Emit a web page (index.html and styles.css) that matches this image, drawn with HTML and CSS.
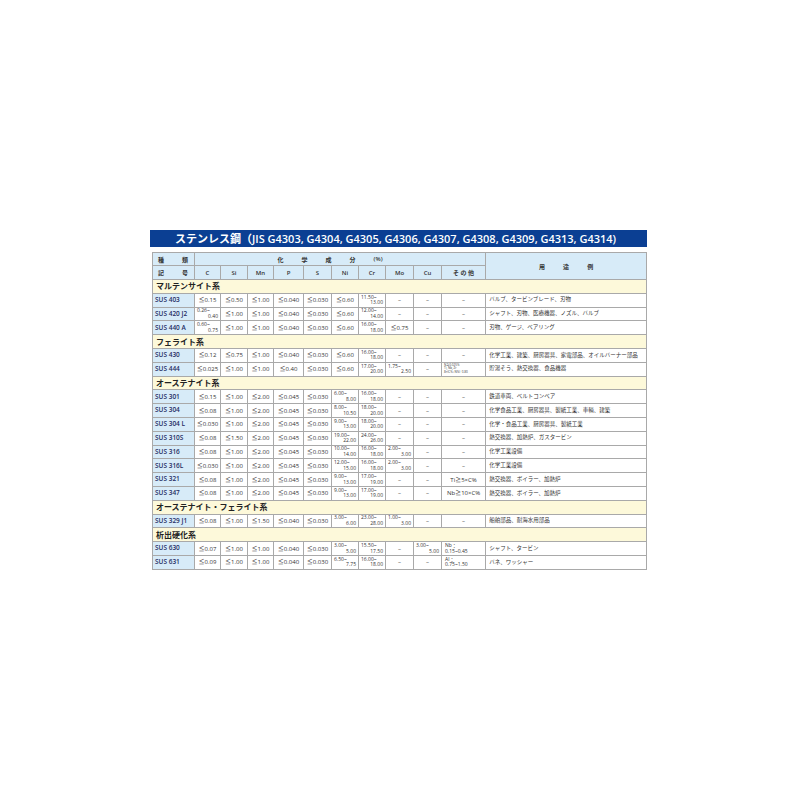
FILE: index.html
```html
<!DOCTYPE html>
<html lang="ja">
<head>
<meta charset="utf-8">
<title>ステンレス鋼</title>
<link rel="stylesheet" href="styles.css">
</head>
<body>
<div class="wrap">
  <div class="title">ステンレス鋼（JIS G4303, G4304, G4305, G4306, G4307, G4308, G4309, G4313, G4314)</div>
  <table class="spec">
    <colgroup>
      <col class="c-name"><col class="c26"><col class="c27"><col class="c26"><col class="c30"><col class="c28"><col class="c27"><col class="c27"><col class="c28"><col class="c28"><col class="c-other"><col class="c-use">
    </colgroup>
    <thead>
      <tr class="h1">
        <th class="hname"><span class="spread"><span>種</span><span>類</span></span></th>
        <th colspan="10" class="hchem"><span class="chem"><span>化</span><span>学</span><span>成</span><span>分</span><span>(%)</span></span></th>
        <th rowspan="2" class="huse"><span class="usel"><span>用</span><span>途</span><span>例</span></span></th>
      </tr>
      <tr class="h2">
        <th class="hname"><span class="spread"><span>記</span><span>号</span></span></th>
        <th>C</th><th>Si</th><th>Mn</th><th>P</th><th>S</th><th>Ni</th><th>Cr</th><th>Mo</th><th>Cu</th><th>そ の 他</th>
      </tr>
    </thead>
    <tbody>
      <tr class="cat"><td colspan="12">マルテンサイト系</td></tr>
      <tr><td class="nm">SUS 403</td><td>≦0.15</td><td>≦0.50</td><td>≦1.00</td><td>≦0.040</td><td>≦0.030</td><td>≦0.60</td><td class="rg"><span>11.50~</span><span>13.00</span></td><td>–</td><td>–</td><td>–</td><td class="use">バルブ、タービンブレード、刃物</td></tr>
      <tr><td class="nm">SUS 420 J2</td><td class="rg"><span>0.26~</span><span>0.40</span></td><td>≦1.00</td><td>≦1.00</td><td>≦0.040</td><td>≦0.030</td><td>≦0.60</td><td class="rg"><span>12.00~</span><span>14.00</span></td><td>–</td><td>–</td><td>–</td><td class="use">シャフト、刃物、医療機器、ノズル、バルブ</td></tr>
      <tr><td class="nm">SUS 440 A</td><td class="rg"><span>0.60~</span><span>0.75</span></td><td>≦1.00</td><td>≦1.00</td><td>≦0.040</td><td>≦0.030</td><td>≦0.60</td><td class="rg"><span>16.00~</span><span>18.00</span></td><td>≦0.75</td><td>–</td><td>–</td><td class="use">刃物、ゲージ、ベアリング</td></tr>
      <tr class="cat"><td colspan="12">フェライト系</td></tr>
      <tr><td class="nm">SUS 430</td><td>≦0.12</td><td>≦0.75</td><td>≦1.00</td><td>≦0.040</td><td>≦0.030</td><td>≦0.60</td><td class="rg"><span>16.00~</span><span>18.00</span></td><td>–</td><td>–</td><td>–</td><td class="use">化学工業、建築、厨房器具、家電部品、オイルバーナー部品</td></tr>
      <tr><td class="nm">SUS 444</td><td>≦0.025</td><td>≦1.00</td><td>≦1.00</td><td>≦0.40</td><td>≦0.030</td><td>≦0.60</td><td class="rg"><span>17.00~</span><span>20.00</span></td><td class="rg"><span>1.75~</span><span>2.50</span></td><td>–</td><td class="tiny"><span>N≦0.025%</span><span>Ti, Nb, Zr</span><span>8×(C%+N%)~0.80</span></td><td class="use">貯湯そう、熱交換器、食品機器</td></tr>
      <tr class="cat"><td colspan="12">オーステナイト系</td></tr>
      <tr><td class="nm">SUS 301</td><td>≦0.15</td><td>≦1.00</td><td>≦2.00</td><td>≦0.045</td><td>≦0.030</td><td class="rg"><span>6.00~</span><span>8.00</span></td><td class="rg"><span>16.00~</span><span>18.00</span></td><td>–</td><td>–</td><td>–</td><td class="use">鉄道車両、ベルトコンベア</td></tr>
      <tr><td class="nm">SUS 304</td><td>≦0.08</td><td>≦1.00</td><td>≦2.00</td><td>≦0.045</td><td>≦0.030</td><td class="rg"><span>8.00~</span><span>10.50</span></td><td class="rg"><span>18.00~</span><span>20.00</span></td><td>–</td><td>–</td><td>–</td><td class="use">化学食品工業、厨房器具、製紙工業、車輌、建築</td></tr>
      <tr><td class="nm">SUS 304 L</td><td>≦0.030</td><td>≦1.00</td><td>≦2.00</td><td>≦0.045</td><td>≦0.030</td><td class="rg"><span>9.00~</span><span>13.00</span></td><td class="rg"><span>18.00~</span><span>20.00</span></td><td>–</td><td>–</td><td>–</td><td class="use">化学・食品工業、厨房器具、製紙工業</td></tr>
      <tr><td class="nm">SUS 310S</td><td>≦0.08</td><td>≦1.50</td><td>≦2.00</td><td>≦0.045</td><td>≦0.030</td><td class="rg"><span>19.00~</span><span>22.00</span></td><td class="rg"><span>24.00~</span><span>26.00</span></td><td>–</td><td>–</td><td>–</td><td class="use">熱交換器、加熱炉、ガスタービン</td></tr>
      <tr><td class="nm">SUS 316</td><td>≦0.08</td><td>≦1.00</td><td>≦2.00</td><td>≦0.045</td><td>≦0.030</td><td class="rg"><span>10.00~</span><span>14.00</span></td><td class="rg"><span>16.00~</span><span>18.00</span></td><td class="rg"><span>2.00~</span><span>3.00</span></td><td>–</td><td>–</td><td class="use">化学工業設備</td></tr>
      <tr><td class="nm">SUS 316L</td><td>≦0.030</td><td>≦1.00</td><td>≦2.00</td><td>≦0.045</td><td>≦0.030</td><td class="rg"><span>12.00~</span><span>15.00</span></td><td class="rg"><span>16.00~</span><span>18.00</span></td><td class="rg"><span>2.00~</span><span>3.00</span></td><td>–</td><td>–</td><td class="use">化学工業設備</td></tr>
      <tr><td class="nm">SUS 321</td><td>≦0.08</td><td>≦1.00</td><td>≦2.00</td><td>≦0.045</td><td>≦0.030</td><td class="rg"><span>9.00~</span><span>13.00</span></td><td class="rg"><span>17.00~</span><span>19.00</span></td><td>–</td><td>–</td><td>Ti≧5×C%</td><td class="use">熱交換器、ボイラー、加熱炉</td></tr>
      <tr><td class="nm">SUS 347</td><td>≦0.08</td><td>≦1.00</td><td>≦2.00</td><td>≦0.045</td><td>≦0.030</td><td class="rg"><span>9.00~</span><span>13.00</span></td><td class="rg"><span>17.00~</span><span>19.00</span></td><td>–</td><td>–</td><td>Nb≧10×C%</td><td class="use">熱交換器、ボイラー、加熱炉</td></tr>
      <tr class="cat"><td colspan="12">オーステナイト・フェライト系</td></tr>
      <tr><td class="nm">SUS 329 J1</td><td>≦0.08</td><td>≦1.00</td><td>≦1.50</td><td>≦0.040</td><td>≦0.030</td><td class="rg"><span>3.00~</span><span>6.00</span></td><td class="rg"><span>23.00~</span><span>28.00</span></td><td class="rg"><span>1.00~</span><span>3.00</span></td><td>–</td><td>–</td><td class="use">船舶部品、耐海水用部品</td></tr>
      <tr class="cat"><td colspan="12">析出硬化系</td></tr>
      <tr><td class="nm">SUS 630</td><td>≦0.07</td><td>≦1.00</td><td>≦1.00</td><td>≦0.040</td><td>≦0.030</td><td class="rg"><span>3.00~</span><span>5.00</span></td><td class="rg"><span>15.50~</span><span>17.50</span></td><td>–</td><td class="rg"><span>3.00~</span><span>5.00</span></td><td class="ot"><span>Nb：</span><span>0.15~0.45</span></td><td class="use">シャフト、タービン</td></tr>
      <tr><td class="nm">SUS 631</td><td>≦0.09</td><td>≦1.00</td><td>≦1.00</td><td>≦0.040</td><td>≦0.030</td><td class="rg"><span>6.50~</span><span>7.75</span></td><td class="rg"><span>16.00~</span><span>18.00</span></td><td>–</td><td>–</td><td class="ot"><span>Al：</span><span>0.75~1.50</span></td><td class="use">バネ、ワッシャー</td></tr>
    </tbody>
  </table>
</div>
</body>
</html>
```

FILE: styles.css
```css
html, body {
  margin: 0;
  padding: 0;
  background: #ffffff;
}
body {
  font-family: "Open Sans", "Noto Sans CJK JP", sans-serif;
  color: #222;
}
.wrap {
  padding: 230px 0 0 150px;
}
.title {
  width: 497px;
  height: 17px;
  box-sizing: border-box;
  background: #0b3f93;
  color: #ffffff;
  font-size: 11px;
  font-weight: 600;
  line-height: 17px;
  padding-left: 25px;
  white-space: nowrap;
  letter-spacing: 0;
  overflow: hidden;
}
.spec {
  margin: 5px 0 0 2px;
  border-collapse: collapse;
  table-layout: fixed;
  width: 494px;
  font-size: 6px;
}
.c-name { width: 42px; }
.c26 { width: 26px; }
.c27 { width: 27px; }
.c28 { width: 28px; }
.c30 { width: 30px; }
.c-other { width: 44px; }
.c-use { width: 161px; }

.spec th, .spec td {
  border: 1px solid #a9a9a9;
  padding: 0;
  height: 13px;
  box-sizing: border-box;
  overflow: hidden;
  white-space: nowrap;
}
.spec th {
  background: #d7ebf8;
  font-weight: 600;
  color: #333;
  font-size: 6px;
  text-align: center;
}
.spec .h1 th { height: 13px; }
.spec .h2 th { height: 14px; }
.spread {
  display: flex;
  justify-content: space-between;
  padding: 0 6px 0 5px;
}
.chem {
  display: flex;
  justify-content: center;
  gap: 18px;
  padding-right: 20px;
}
.usel {
  display: flex;
  justify-content: center;
  gap: 18px;
}
.spec td {
  text-align: center;
  font-size: 6px;
  color: #333;
  height: 13.8px;
  line-height: 1;
}
.spec .cat td {
  background: #fdf9da;
  text-align: left;
  font-size: 8px;
  font-weight: 600;
  color: #222;
  padding-left: 3px;
}
.spec td.nm {
  background: #d7ebf8;
  text-align: left;
  font-size: 6.5px;
  font-weight: 600;
  color: #1f2d63;
  padding-left: 2px;
}
.spec td.use {
  text-align: left;
  font-size: 5.5px;
  padding-left: 3px;
}
.spec td.rg span {
  display: block;
  font-size: 5px;
  line-height: 5.5px;
}
.spec td.rg span:first-child {
  text-align: left;
  padding-left: 2px;
}
.spec td.rg span:last-child {
  text-align: right;
  padding-right: 2px;
}
.spec td.tiny span {
  display: block;
  font-size: 3px;
  line-height: 3.4px;
  text-align: left;
  padding-left: 2px;
}
.spec td.ot span {
  display: block;
  font-size: 5px;
  line-height: 5.5px;
  text-align: left;
  padding-left: 3px;
}
```
